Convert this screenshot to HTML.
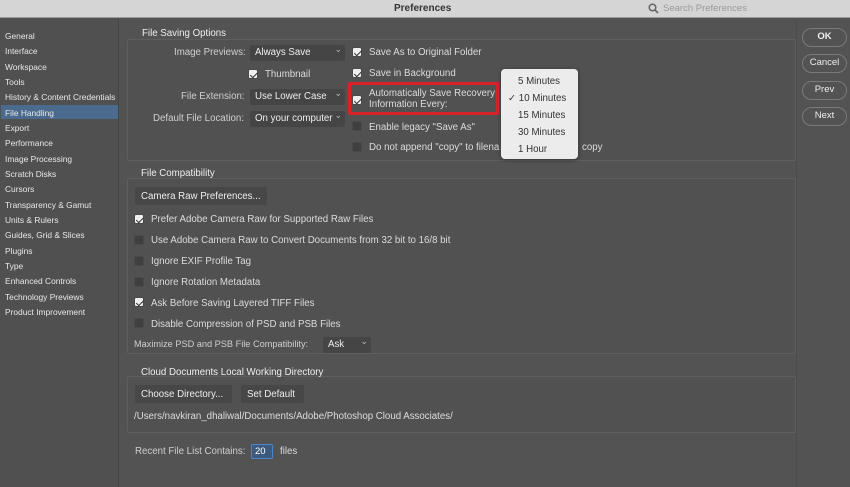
<!DOCTYPE html>
<html><head><meta charset="utf-8"><style>
*{margin:0;padding:0;box-sizing:border-box}
body{width:850px;height:487px;overflow:hidden;background:#535353;font-family:"Liberation Sans",Arial,sans-serif;color:#e6e6e6;font-size:9.5px;position:relative}
.a{position:absolute;white-space:nowrap}
#tb{position:absolute;left:0;top:0;width:850px;height:18px;background:#d5d5d5;border-bottom:1px solid #9a9a9a}
#side{position:absolute;left:0;top:19px;width:119px;height:468px;background:#505050;border-right:1px solid #444}
.si{position:absolute;left:5px;font-size:8.4px;color:#e8e8e8;white-space:nowrap}
.grp{position:absolute;border:1px solid #5e5e5e;background:#515151;border-radius:2px}
.lbl{font-size:9.7px;color:#dcdcdc}
.cb{position:absolute;width:10px;height:10px;border-radius:2px;background:#3f3f3f;border:1px solid #4a4a4a}
.cb.on{background:#efefef}
.cb.on:after{content:"";position:absolute;left:2.5px;top:0.5px;width:3px;height:5.5px;border:solid #333;border-width:0 1.6px 1.6px 0;transform:rotate(45deg)}
.sel{position:absolute;height:16px;background:#454545;border-radius:2px;padding:2px 5px;font-size:9.7px;color:#eee;white-space:nowrap;overflow:hidden}
.sel:after{content:"⌄";position:absolute;right:3px;top:-1px;color:#bbb;font-size:9px}
.btn{position:absolute;height:18px;background:#474747;border-radius:2px;padding:4px 6px;font-size:9.7px;color:#eee;white-space:nowrap}
.rb{position:absolute;left:802px;width:45px;height:19px;border:1.5px solid #7a7a7a;border-radius:10px;text-align:center;font-size:9.5px;line-height:16px;color:#eee}
</style></head><body>
<div id="tb"></div>
<div class="a" style="left:394px;top:3px;font-size:10px;font-weight:bold;color:#333">Preferences</div>
<svg class="a" style="left:648px;top:3px" width="11" height="11"><circle cx="4.5" cy="4.5" r="3.3" fill="none" stroke="#666" stroke-width="1.5"/><line x1="7" y1="7" x2="10" y2="10" stroke="#666" stroke-width="1.6"/></svg>
<div class="a" style="left:663px;top:3px;font-size:9.5px;color:#9a9a9a">Search Preferences</div>

<div id="side"></div>
<div class="a" style="left:1px;top:105px;width:117px;height:14px;background:#4a6a8e"></div>
<div class="si" style="top:31px">General</div>
<div class="si" style="top:46px">Interface</div>
<div class="si" style="top:62px">Workspace</div>
<div class="si" style="top:77px">Tools</div>
<div class="si" style="top:92px">History &amp; Content Credentials</div>
<div class="si" style="top:108px">File Handling</div>
<div class="si" style="top:123px">Export</div>
<div class="si" style="top:138px">Performance</div>
<div class="si" style="top:154px">Image Processing</div>
<div class="si" style="top:169px">Scratch Disks</div>
<div class="si" style="top:184px">Cursors</div>
<div class="si" style="top:200px">Transparency &amp; Gamut</div>
<div class="si" style="top:215px">Units &amp; Rulers</div>
<div class="si" style="top:230px">Guides, Grid &amp; Slices</div>
<div class="si" style="top:246px">Plugins</div>
<div class="si" style="top:261px">Type</div>
<div class="si" style="top:276px">Enhanced Controls</div>
<div class="si" style="top:292px">Technology Previews</div>
<div class="si" style="top:307px">Product Improvement</div>

<div class="grp" style="left:127px;top:39px;width:669px;height:122px"></div>
<div class="grp" style="left:127px;top:178px;width:669px;height:176px"></div>
<div class="grp" style="left:127px;top:376px;width:669px;height:57px"></div>

<div class="a lbl" style="left:142px;top:28px;color:#eee">File Saving Options</div>
<div class="a lbl" style="left:174px;top:47px;color:#cfcfcf">Image Previews:</div>
<div class="sel" style="left:250px;top:45px;width:95px">Always Save</div>
<div class="cb on" style="left:248px;top:69px"></div>
<div class="a lbl" style="left:265px;top:69px">Thumbnail</div>
<div class="a lbl" style="left:181px;top:91px;color:#cfcfcf">File Extension:</div>
<div class="sel" style="left:250px;top:89px;width:95px">Use Lower Case</div>
<div class="a lbl" style="left:153px;top:113px;color:#cfcfcf">Default File Location:</div>
<div class="sel" style="left:250px;top:111px;width:95px">On your computer</div>

<div class="cb on" style="left:352px;top:47px"></div>
<div class="a lbl" style="left:369px;top:47px">Save As to Original Folder</div>
<div class="cb on" style="left:352px;top:68px"></div>
<div class="a lbl" style="left:369px;top:68px">Save in Background</div>
<div class="a" style="left:348px;top:82px;width:151px;height:33px;border:3px solid #d8222a;border-radius:2px"></div>
<div class="cb on" style="left:352px;top:95px"></div>
<div class="a lbl" style="left:369px;top:88px;line-height:11px">Automatically Save Recovery<br>Information Every:</div>
<div class="cb" style="left:352px;top:121px"></div>
<div class="a lbl" style="left:369px;top:122px">Enable legacy "Save As"</div>
<div class="cb" style="left:352px;top:142px"></div>
<div class="a lbl" style="left:369px;top:142px">Do not append "copy" to filena</div>
<div class="a lbl" style="left:582px;top:142px">copy</div>

<div class="a" style="left:501px;top:69px;width:77px;height:90px;background:#ececec;border-radius:4px;box-shadow:0 1px 4px rgba(0,0,0,.4)"></div>
<div class="a" style="left:518px;top:76px;font-size:9.7px;color:#333">5 Minutes</div>
<div class="a" style="left:508px;top:93px;font-size:9.7px;color:#333">✓ 10 Minutes</div>
<div class="a" style="left:518px;top:110px;font-size:9.7px;color:#333">15 Minutes</div>
<div class="a" style="left:518px;top:127px;font-size:9.7px;color:#333">30 Minutes</div>
<div class="a" style="left:518px;top:144px;font-size:9.7px;color:#333">1 Hour</div>

<div class="a lbl" style="left:141px;top:168px;color:#eee">File Compatibility</div>
<div class="btn" style="left:135px;top:187px;width:132px">Camera Raw Preferences...</div>
<div class="cb on" style="left:134px;top:214px"></div>
<div class="a lbl" style="left:151px;top:214px">Prefer Adobe Camera Raw for Supported Raw Files</div>
<div class="cb" style="left:134px;top:235px"></div>
<div class="a lbl" style="left:151px;top:235px">Use Adobe Camera Raw to Convert Documents from 32 bit to 16/8 bit</div>
<div class="cb" style="left:134px;top:256px"></div>
<div class="a lbl" style="left:151px;top:256px">Ignore EXIF Profile Tag</div>
<div class="cb" style="left:134px;top:277px"></div>
<div class="a lbl" style="left:151px;top:277px">Ignore Rotation Metadata</div>
<div class="cb on" style="left:134px;top:297px"></div>
<div class="a lbl" style="left:151px;top:298px">Ask Before Saving Layered TIFF Files</div>
<div class="cb" style="left:134px;top:318px"></div>
<div class="a lbl" style="left:151px;top:319px">Disable Compression of PSD and PSB Files</div>
<div class="a" style="left:134px;top:339px;font-size:9.2px;color:#cfcfcf">Maximize PSD and PSB File Compatibility:</div>
<div class="sel" style="left:323px;top:337px;width:48px">Ask</div>

<div class="a lbl" style="left:141px;top:367px;color:#eee">Cloud Documents Local Working Directory</div>
<div class="btn" style="left:135px;top:385px;width:97px">Choose Directory...</div>
<div class="btn" style="left:241px;top:385px;width:63px">Set Default</div>
<div class="a" style="left:134px;top:411px;font-size:9.7px;color:#ddd">/Users/navkiran_dhaliwal/Documents/Adobe/Photoshop Cloud Associates/</div>

<div class="a" style="left:135px;top:446px;font-size:9.7px;color:#cfcfcf">Recent File List Contains:</div>
<div class="a" style="left:251px;top:444px;width:22px;height:15px;background:#3b5a7e;border:1px solid #4c85c8;border-radius:2px;padding:1px 3px;font-size:9.5px;color:#fff">20</div>
<div class="a" style="left:280px;top:446px;font-size:9.7px;color:#ddd">files</div>

<div class="a" style="left:796px;top:19px;width:1px;height:468px;background:#4b4b4b"></div>
<div class="rb" style="top:28px;font-weight:bold">OK</div>
<div class="rb" style="top:54px">Cancel</div>
<div class="rb" style="top:81px">Prev</div>
<div class="rb" style="top:107px">Next</div>
</body></html>
